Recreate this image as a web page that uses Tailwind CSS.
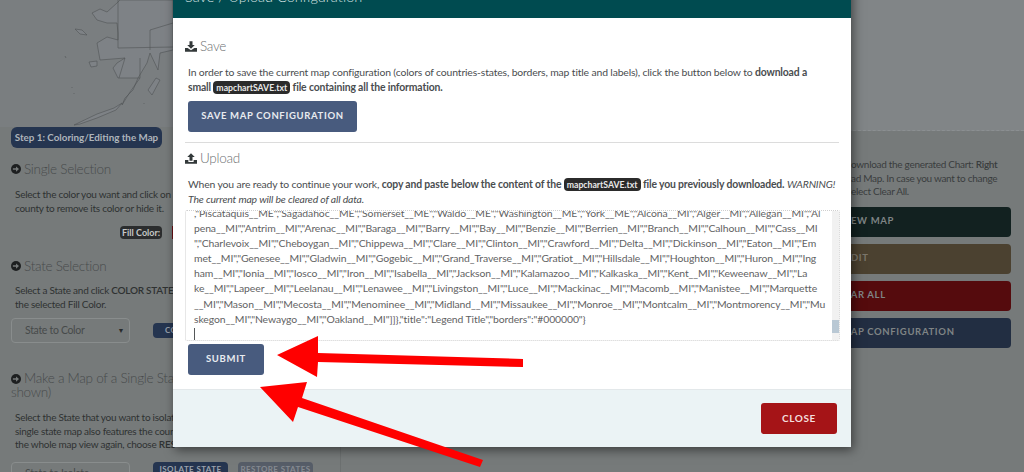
<!DOCTYPE html>
<html lang="en">
<head>
  <meta charset="UTF-8" />
  <title>Save / Upload Configuration</title>
  <script src="https://cdn.jsdelivr.net/npm/@tailwindcss/browser@4"></script>
</head>
<body class="bg-[#767a7a]">
  <div class="relative w-[1024px] h-[472px] overflow-hidden font-['Lato','Noto_Sans',sans-serif] text-[#2f3232]">

    <!-- page behind the modal -->
    <div class="flex h-full">
      <aside class="w-[341px] shrink-0 h-[600px] border-r border-[#6c7070] pl-[11px] pr-3 bg-[#767a7a]">
        <!-- Alaska, part of the map -->
        <svg class="block -ml-[11px] w-[173px] h-[127px] bg-[#7a7e80]" viewBox="0 0 173 127" fill="#7e8286" stroke="#505456" stroke-width="0.6">
          <path d="M92 13L100 9L107 12L117 3L120 0H173V50L160 53L158 70L150 53L147 63L138 78L133 90L125 98L122 105L130 92L140 78H118L113 68L117 63L125 58L100 60L97 43L107 37L118 40V33L117 23H107L97 20Z"/>
          <path fill="none" d="M118 0V48L173 47M125 58L119 78M140 58V78M150 30V50M150 30L173 23"/>
          <path d="M75 29L82 30L87 35L80 34Z"/>
          <path d="M89 62L97 61L97 66L91 67Z"/>
          <path d="M148 90L156 78L160 80L152 95Z"/>
          <path d="M122 103L114 108L97 114L74 125L80 124L97 118L116 110Z"/>
          <path d="M65 56l1 2M72 87v1M74 93v1M144 103v1"/>
        </svg>
        <div class="w-[151px] h-[21px] rounded-md bg-[#253550] text-[#aeb4bb] text-[9.8px] font-bold flex items-center justify-center whitespace-nowrap">Step 1: Coloring/Editing the Map</div>

        <h3 class="mt-[11px] flex items-center gap-[3px] text-[13.5px] font-light tracking-[-0.02em] leading-[20px] text-[#484b4c] whitespace-nowrap">
          <svg viewBox="0 0 16 16" class="w-[10px] h-[10px] text-[#1d1f20]"><circle cx="8" cy="8" r="8" fill="currentColor"/><path d="M3 6.800h5V3.800L12.800 8 8 12.200V9.200H3z" fill="#767a7a"/></svg>
          Single Selection
        </h3>
        <p class="mt-[9px] pl-1 text-[10px] tracking-[-0.025em] leading-[13.5px] whitespace-nowrap">Select the color you want and click on a<br>county to remove its color or hide it.</p>
        <div class="mt-[11px] ml-[109px] flex items-center h-[13px]">
          <span class="px-[2px] rounded-sm bg-[#2b2d2e] text-[#c4c6c6] text-[9px] leading-[13px] font-bold whitespace-nowrap">Fill Color:</span>
          <span class="ml-[10px] w-[3px] h-[13px] bg-[#6b1015]"></span>
        </div>

        <h3 class="mt-[17px] flex items-center gap-[3px] text-[13.5px] font-light tracking-[-0.02em] leading-[20px] text-[#484b4c] whitespace-nowrap">
          <svg viewBox="0 0 16 16" class="w-[10px] h-[10px] text-[#1d1f20]"><circle cx="8" cy="8" r="8" fill="currentColor"/><path d="M3 6.800h5V3.800L12.800 8 8 12.200V9.200H3z" fill="#767a7a"/></svg>
          State Selection
        </h3>
        <p class="mt-[8px] pl-1 text-[10px] tracking-[-0.025em] leading-[13.5px] whitespace-nowrap">Select a State and click <b class="font-semibold">COLOR STATE</b> to<br>the selected Fill Color.</p>
        <div class="mt-[7px] flex items-center">
          <div class="w-[119px] h-[25px] rounded border border-[#898d8d] flex items-center justify-between pl-[13px] pr-[5px] text-[10.5px] tracking-[-0.03em] text-[#474a4a]">State to Color <span class="text-[7px] text-[#292b2b]">▼</span></div>
          <div class="ml-[23px] w-[40px] h-[15px] rounded-sm bg-[#253550] text-[#9aa2ac] text-[8px] font-bold tracking-wider pl-3 leading-[15px]">CO</div>
        </div>

        <h3 class="mt-[28px] text-[13.5px] font-light tracking-[-0.02em] leading-[14px] text-[#484b4c] whitespace-nowrap">
          <svg viewBox="0 0 16 16" class="inline-block align-[-1px] mr-[3px] w-[10px] h-[10px] text-[#1d1f20]"><circle cx="8" cy="8" r="8" fill="currentColor"/><path d="M3 6.800h5V3.800L12.800 8 8 12.200V9.200H3z" fill="#767a7a"/></svg>Make a Map of a Single State<br>shown)
        </h3>
        <p class="mt-[12px] pl-1 text-[10px] tracking-[-0.025em] leading-[13.5px] whitespace-nowrap">Select the State that you want to isolate<br>single state map also features the coun<br>the whole map view again, choose <b class="font-semibold">RES</b></p>
        <div class="mt-[10px] flex items-start">
          <div class="w-[119px] h-[25px] rounded border border-[#898d8d] flex items-center justify-between pl-[13px] pr-[5px] text-[10.5px] tracking-[-0.03em] text-[#474a4a]">State to Isolate <span class="text-[7px] text-[#292b2b]">▼</span></div>
          <div class="ml-[23px] w-[75px] h-[15px] rounded-sm bg-[#253550] text-[#9aa2ac] text-[8px] font-bold tracking-wider text-center leading-[15px] whitespace-nowrap">ISOLATE STATE</div>
          <div class="ml-[10px] w-[75px] h-[15px] rounded-sm bg-[#565d68] text-[#858a91] text-[8px] font-bold tracking-wider text-center leading-[15px] whitespace-nowrap">RESTORE STATES</div>
        </div>
      </aside>

      <div class="flex-1"></div>

      <section class="w-[176px] shrink-0">
        <div class="h-[131px] bg-[#818587] border-b border-dashed border-[#8b8f91]"></div>
        <p class="mt-[27px] pl-[3px] text-[10px] tracking-[-0.03em] leading-[13.5px] text-[#3a3d3e] whitespace-nowrap">ownload the generated Chart: <b class="font-semibold">Right</b><br>ad Map. In case you want to change<br>elect Clear All.</p>
        <div class="mt-[8px] w-[163px] flex flex-col gap-[7px] text-[9.5px] font-bold tracking-[0.07em] text-[#7f8485] whitespace-nowrap">
          <div class="h-[30px] rounded-r-sm bg-[#122120] flex items-center">&nbsp;EW MAP</div>
          <div class="h-[30px] rounded-r-sm bg-[#4b4130] flex items-center text-[#7b766c]">&nbsp;DIT</div>
          <div class="h-[30px] rounded-r-sm bg-[#550b0d] flex items-center">&nbsp;AR ALL</div>
          <div class="h-[30px] rounded-r-sm bg-[#222e42] flex items-center">&nbsp;AP CONFIGURATION</div>
        </div>
      </section>
    </div>

    <!-- modal -->
    <div class="absolute left-[173px] top-[-32px] w-[678px] h-[479px] bg-white flex flex-col shadow-[2px_3px_10px_rgba(0,0,0,0.5)]">
      <div class="h-[50px] shrink-0 bg-[#004b50] flex items-end pb-[11px] pl-[12px] text-[#d8e4e4] text-[14.5px] font-light leading-[20px] whitespace-nowrap">Save / Upload Configuration</div>

      <div class="flex-1 px-[12px] text-[#4a4d4f]">
        <h4 class="mt-[18px] flex items-center gap-[3px] text-[13.5px] font-light tracking-[-0.02em] leading-[20px] text-[#6d7072]">
          <svg viewBox="0 0 16 14" class="w-[12px] h-[11px]"><path fill="#33393a" d="M6 0h4v5h3L8 10 3 5h3zM0 9h3.500L8 12l4.500-3H16v5H0z"/></svg>
          Save
        </h4>
        <p class="mt-[9px] pl-[3px] text-[10.4px] tracking-[-0.014em] leading-[15px] whitespace-nowrap">In order to save the current map configuration (colors of countries-states, borders, map title and labels), click the button below to <b class="font-bold">download a</b></p>
        <p class="pl-[3px] text-[10.4px] tracking-[-0.014em] leading-[15px] whitespace-nowrap font-bold">small <span class="inline-block px-[3px] rounded-sm bg-[#2b2b2b] text-[#e9e9e9] text-[8.7px] tracking-normal leading-[13px]">mapchartSAVE.txt</span> file containing all the information.</p>
        <button class="block mt-[6px] ml-[3px] w-[169px] h-[31px] rounded-[3px] bg-[#485b7e] text-[#e8ebf0] text-[9.5px] font-bold tracking-[0.07em]">SAVE MAP CONFIGURATION</button>
        <div class="mt-[10px] h-px bg-[#dcdcdc]"></div>
        <h4 class="mt-[5px] flex items-center gap-[3px] text-[13.5px] font-light tracking-[-0.02em] leading-[20px] text-[#6d7072]">
          <svg viewBox="0 0 16 14" class="w-[12px] h-[11px]"><path fill="#33393a" d="M8 0l5 5h-3v5H6V5H3zM0 9h4.500v2.500h7V9H16v5H0z"/></svg>
          Upload
        </h4>
        <p class="mt-[9px] pl-[3px] text-[10.4px] tracking-[-0.014em] leading-[15px] whitespace-nowrap">When you are ready to continue your work, <b class="font-bold">copy and paste below the content of the <span class="inline-block px-[3px] rounded-sm bg-[#2b2b2b] text-[#e9e9e9] text-[8.7px] tracking-normal leading-[13px]">mapchartSAVE.txt</span> file you previously downloaded.</b> <i>WARNING!</i></p>
        <p class="pl-[3px] text-[10.4px] tracking-[-0.014em] leading-[15px] whitespace-nowrap italic">The current map will be cleared of all data.</p>

        <div class="relative mt-[3px] w-[655px] h-[131px] rounded-[2px] border border-dotted border-[#cfcfcf] overflow-hidden text-[10.4px] tracking-[-0.008em] leading-[15.1px] text-[#5f6263] whitespace-nowrap pl-[8px]">
          <div class="mt-[-5px]">
            <div>,"Piscataquis__ME","Sagadahoc__ME","Somerset__ME","Waldo__ME","Washington__ME","York__ME","Alcona__MI","Alger__MI","Allegan__MI","Al</div>
            <div>pena__MI","Antrim__MI","Arenac__MI","Baraga__MI","Barry__MI","Bay__MI","Benzie__MI","Berrien__MI","Branch__MI","Calhoun__MI","Cass__MI</div>
            <div>","Charlevoix__MI","Cheboygan__MI","Chippewa__MI","Clare__MI","Clinton__MI","Crawford__MI","Delta__MI","Dickinson__MI","Eaton__MI","Em</div>
            <div>met__MI","Genesee__MI","Gladwin__MI","Gogebic__MI","Grand_Traverse__MI","Gratiot__MI","Hillsdale__MI","Houghton__MI","Huron__MI","Ing</div>
            <div>ham__MI","Ionia__MI","Iosco__MI","Iron__MI","Isabella__MI","Jackson__MI","Kalamazoo__MI","Kalkaska__MI","Kent__MI","Keweenaw__MI","La</div>
            <div>ke__MI","Lapeer__MI","Leelanau__MI","Lenawee__MI","Livingston__MI","Luce__MI","Mackinac__MI","Macomb__MI","Manistee__MI","Marquette</div>
            <div>__MI","Mason__MI","Mecosta__MI","Menominee__MI","Midland__MI","Missaukee__MI","Monroe__MI","Montcalm__MI","Montmorency__MI","Mu</div>
            <div>skegon__MI","Newaygo__MI","Oakland__MI"]]},"title":"Legend Title","borders":"#000000"}</div>
            <div class="w-px h-[13px] mt-[1px] bg-[#555859]"></div>
          </div>
          <div class="absolute right-0 top-0 bottom-0 w-[7px] bg-[#f1f1f1]">
            <div class="mt-[109px] h-[13px] bg-[#b9c8d4]"></div>
          </div>
        </div>

        <button class="block mt-[3px] ml-[3px] w-[76px] h-[31px] rounded-[3px] bg-[#485b7e] text-[#e8ebf0] text-[9.5px] font-bold tracking-[0.07em]">SUBMIT</button>
      </div>

      <div class="h-[58px] shrink-0 bg-[#ebf3f5] border-t border-[#e3e8ea] flex items-center justify-end pr-[14px]">
        <button class="w-[76px] h-[31px] rounded-[3px] bg-[#a51417] text-[#f3dede] text-[10px] font-bold tracking-[0.06em]">CLOSE</button>
      </div>
    </div>

    <!-- red arrows drawn over the screenshot -->
    <svg class="absolute inset-0 w-[1024px] h-[472px] pointer-events-none" viewBox="0 0 1024 472" fill="#ff0000">
      <path d="M277 355L318 336L318 353L523 359L523 367L318 362L317 377Z"/>
      <path d="M260 387L307 382L302 398L483 460L480 467L298 407L293 422Z"/>
    </svg>
  </div>
</body>
</html>
